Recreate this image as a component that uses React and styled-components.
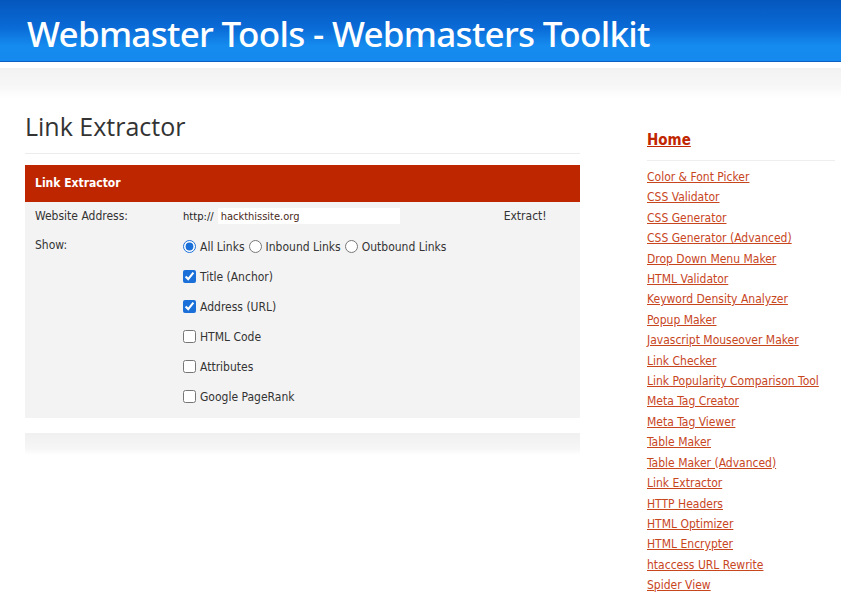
import React from "react";
import styled, { createGlobalStyle } from "styled-components";

const Global = createGlobalStyle`
  html, body { margin: 0; padding: 0; background: #fff; }
  body { font-family: "DejaVu Sans Condensed", "DejaVu Sans", sans-serif; font-size: 12px; color: #333; }
`;

const Header = styled.header`
  height: 62px;
  background: linear-gradient(to bottom, #0557bd 0%, #0a6ad6 45%, #158bef 75%, #1589ee 100%);
  border-bottom: 1px solid #0b5fc0;
  box-sizing: border-box;
  padding: 11px 0 0 27px;
`;

const SiteTitle = styled.h1`
  margin: 0;
  font-family: "Noto Sans", "Open Sans", sans-serif;
  font-weight: 500;
  font-size: 35px;
  letter-spacing: -0.7px;
  line-height: 46px;
  color: #fff;
`;

const Strip = styled.div`
  height: 30px;
  margin-top: 6px;
  background: linear-gradient(to bottom, #f2f2f2, #f7f7f7 60%, #fff);
`;

const Layout = styled.div`
  display: flex;
  gap: 67px;
  padding: 0 0 0 25px;
`;

const Main = styled.main`
  width: 555px;
  flex: none;
`;

const PageTitle = styled.h2`
  margin: 11px 0 0;
  font-family: "Open Sans", sans-serif;
  font-weight: 400;
  font-size: 25px;
  line-height: 34px;
  color: #333;
  padding-bottom: 10px;
  border-bottom: 1px solid #ececec;
`;

const Box = styled.section`
  margin-top: 11px;
  background: #f3f3f3;
`;

const BoxHead = styled.div`
  background: #be2600;
  height: 37px;
  line-height: 36px;
  padding-left: 10px;
  color: #fff;
  font-weight: bold;
  font-size: 12px;
`;

const Form = styled.div`
  padding: 6px 0 0 10px;
`;

const Row = styled.div`
  display: grid;
  grid-template-columns: 148px 1fr;
  align-items: start;
  min-height: ${(p) => p.h || 30}px;
`;

const Label = styled.div`
  color: #333;
  line-height: 14px;
  padding-top: ${(p) => p.pt || 0}px;
`;

const AddressLine = styled.div`
  display: flex;
  align-items: center;
  height: 16px;
`;

const Prefix = styled.span`
  font-size: 10px;
  color: #222;
  font-family: "DejaVu Sans", sans-serif;
  margin-right: 4px;
`;

const UrlInput = styled.input`
  width: 182px;
  height: 16px;
  box-sizing: border-box;
  border: 0;
  background: #fff;
  padding: 0 0 0 3px;
  font-family: "DejaVu Sans Condensed", "DejaVu Sans", sans-serif;
  font-size: 11px;
  color: #4a2a1a;
  outline: none;
`;

const Extract = styled.button`
  margin-left: 104px;
  border: 0;
  background: transparent;
  padding: 0;
  font-family: inherit;
  font-size: 12px;
  color: #333;
`;

const Options = styled.div`
  display: flex;
  align-items: center;
  height: 17px;
`;

const Opt = styled.label`
  display: inline-flex;
  align-items: center;
  color: #333;
  margin-right: 4px;
  input {
    margin: 0 4px 0 0;
    width: 13px;
    height: 13px;
    accent-color: #1a6fd8;
  }
`;

const Footer = styled.div`
  margin-top: 15px;
  height: 22px;
  background: linear-gradient(to bottom, #f0f0f0, #f6f6f6 70%, #fff);
`;

const Side = styled.aside`
  width: 188px;
  padding-top: 33px;
`;

const Home = styled.a`
  display: inline-block;
  font-size: 15px;
  font-weight: bold;
  color: #c02600;
  text-decoration: underline;
  line-height: 18px;
`;

const SideRule = styled.div`
  height: 1px;
  background: #eeeeee;
  margin: 11px 0 6px;
`;

const LinkList = styled.ul`
  list-style: none;
  margin: 0;
  padding: 0;
`;

const LinkItem = styled.li`
  line-height: 20.4px;
  a {
    color: #c8461e;
    text-decoration: underline;
    font-size: 12px;
  }
`;

const links = [
  "Color & Font Picker",
  "CSS Validator",
  "CSS Generator",
  "CSS Generator (Advanced)",
  "Drop Down Menu Maker",
  "HTML Validator",
  "Keyword Density Analyzer",
  "Popup Maker",
  "Javascript Mouseover Maker",
  "Link Checker",
  "Link Popularity Comparison Tool",
  "Meta Tag Creator",
  "Meta Tag Viewer",
  "Table Maker",
  "Table Maker (Advanced)",
  "Link Extractor",
  "HTTP Headers",
  "HTML Optimizer",
  "HTML Encrypter",
  "htaccess URL Rewrite",
  "Spider View",
];

const checks = [
  ["Title (Anchor)", true],
  ["Address (URL)", true],
  ["HTML Code", false],
  ["Attributes", false],
  ["Google PageRank", false],
];

export default function App() {
  return (
    <>
      <Global />
      <Header>
        <SiteTitle>Webmaster Tools - Webmasters Toolkit</SiteTitle>
      </Header>
      <Strip />
      <Layout>
        <Main>
          <PageTitle>Link Extractor</PageTitle>
          <Box>
            <BoxHead>Link Extractor</BoxHead>
            <Form>
              <Row h={30}>
                <Label pt={1}>Website Address:</Label>
                <AddressLine>
                  <Prefix>http://</Prefix>
                  <UrlInput defaultValue="hackthissite.org" />
                  <Extract>Extract!</Extract>
                </AddressLine>
              </Row>
              <Row h={30}>
                <Label>Show:</Label>
                <Options>
                  <Opt><input type="radio" name="show" defaultChecked />All Links</Opt>
                  <Opt><input type="radio" name="show" />Inbound Links</Opt>
                  <Opt><input type="radio" name="show" />Outbound Links</Opt>
                </Options>
              </Row>
              {checks.map(([t, c]) => (
                <Row key={t} h={30}>
                  <Label />
                  <Options>
                    <Opt><input type="checkbox" defaultChecked={c} />{t}</Opt>
                  </Options>
                </Row>
              ))}
            </Form>
          </Box>
          <Footer />
        </Main>
        <Side>
          <Home href="#">Home</Home>
          <SideRule />
          <LinkList>
            {links.map((l) => (
              <LinkItem key={l}><a href="#">{l}</a></LinkItem>
            ))}
          </LinkList>
        </Side>
      </Layout>
    </>
  );
}
